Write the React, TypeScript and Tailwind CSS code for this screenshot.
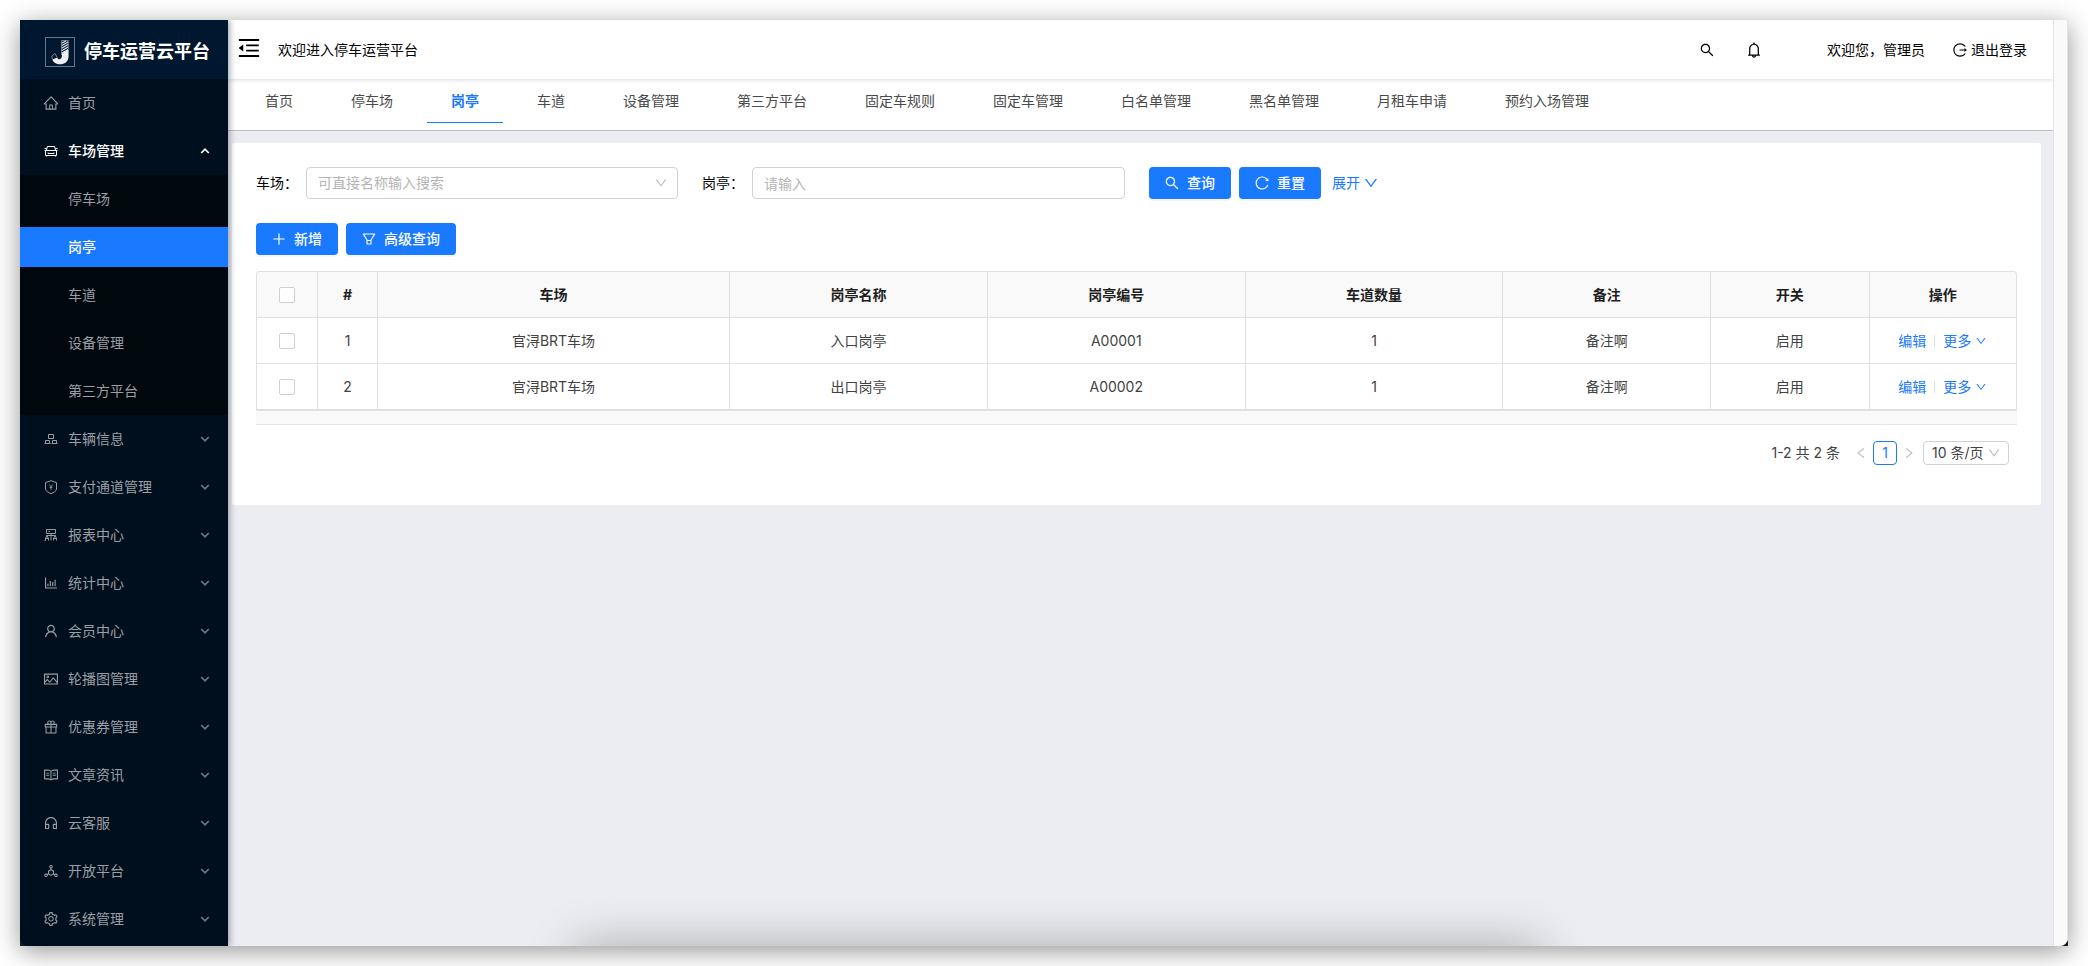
import React from 'react';
import {
  AiOutlineHome, AiOutlineBarChart, AiOutlineUser, AiOutlinePicture,
  AiOutlineGift, AiOutlineRead, AiOutlineCustomerService, AiOutlineDeploymentUnit, AiOutlineSetting,
  AiOutlineSearch, AiOutlineBell, AiOutlineLogout, AiOutlineReload, AiOutlinePlus, AiOutlineFilter, AiOutlineDown,
  AiOutlineLeft, AiOutlineRight, AiOutlineMenuFold,
} from 'react-icons/ai';

type IconType = React.ComponentType<{ className?: string }>;

function ParkIcon({ className }: { className?: string }) {
  return (
    <svg viewBox="-1 -1 16 16" fill="none" stroke="currentColor" className={className}>
      <path d="M2.5 6 L3.4 2.5 H10.6 L11.5 6 M0.5 6.5 H13.5 M0.5 4.5 H2.5 M11.5 4.5 H13.5 M1.5 6.5 V11.5 H12.5 V6.5 M4 8.5 V9.5 H10 V8.5 M2.5 11.5 V12.5 M11.5 11.5 V12.5" />
    </svg>
  );
}

function BoxesIcon({ className }: { className?: string }) {
  return (
    <svg viewBox="-1 -1 16 16" fill="none" stroke="currentColor" className={className}>
      <path d="M4.5 2.5 H9.5 V6.5 H4.5 Z M1.5 8.5 H5.5 V11.5 H1.5 Z M8.5 8.5 H12.5 V11.5 H8.5 Z M5.5 11.5 H6.5 M1.5 11.5 H0.5 M7.5 11.5 H8.5 M12.5 11.5 H13.5" />
    </svg>
  );
}

function PayShieldIcon({ className }: { className?: string }) {
  return (
    <svg viewBox="-1 -1 16 16" fill="none" stroke="currentColor" className={className}>
      <path d="M7 0.7 L12.5 2.6 V9 C12.5 11 9.5 12.6 7 13.7 C4.5 12.6 1.5 11 1.5 9 V2.6 Z" />
      <path d="M5.3 4.5 L7 7 L8.7 4.5 M7 7 V9.8 M5.5 7.4 H8.5" strokeWidth="0.8" />
    </svg>
  );
}

function ReportIcon({ className }: { className?: string }) {
  return (
    <svg viewBox="-1 -1 16 16" fill="none" stroke="currentColor" className={className}>
      <path d="M2.5 1.5 H11.5 V5.5 H2.5 Z M4.5 3.5 H6 M7 5.5 V12.5 M2.5 7.5 H11.5 M2.8 7.5 L1.5 10.5 V12.5 H0.5 M2.8 7.5 L4.5 10.5 V12.5 M11.2 7.5 L9.5 10.5 V12.5 M11.2 7.5 L12.5 10.5 V12.5 M1.5 10.5 H4.5 M9.5 10.5 H12.5" />
    </svg>
  );
}

const groups: { label: string; icon: IconType }[] = [
  { label: '车辆信息', icon: BoxesIcon },
  { label: '支付通道管理', icon: PayShieldIcon },
  { label: '报表中心', icon: ReportIcon },
  { label: '统计中心', icon: AiOutlineBarChart },
  { label: '会员中心', icon: AiOutlineUser },
  { label: '轮播图管理', icon: AiOutlinePicture },
  { label: '优惠券管理', icon: AiOutlineGift },
  { label: '文章资讯', icon: AiOutlineRead },
  { label: '云客服', icon: AiOutlineCustomerService },
  { label: '开放平台', icon: AiOutlineDeploymentUnit },
  { label: '系统管理', icon: AiOutlineSetting },
];

const parkingItems = ['停车场', '岗亭', '车道', '设备管理', '第三方平台'];

const tabs = ['首页', '停车场', '岗亭', '车道', '设备管理', '第三方平台', '固定车规则', '固定车管理', '白名单管理', '黑名单管理', '月租车申请', '预约入场管理'];

const rows = [
  { id: 1, park: '官浔BRT车场', name: '入口岗亭', code: 'A00001', lanes: 1, note: '备注啊', state: '启用' },
  { id: 2, park: '官浔BRT车场', name: '出口岗亭', code: 'A00002', lanes: 1, note: '备注啊', state: '启用' },
];

function Caret({ className }: { className?: string }) {
  return (
    <svg viewBox="0 0 10 10" fill="none" stroke="currentColor" strokeWidth="1.7" className={className}>
      <path d="M1.2 3 L5 6.8 L8.8 3" />
    </svg>
  );
}

function Sidebar() {
  return (
    <aside className="relative z-20 flex w-52 shrink-0 flex-col bg-[#000f1e] text-[#9a9fa5] shadow-[2px_0_6px_rgba(0,21,41,0.35)]">
      <div className="flex h-[59px] shrink-0 items-center gap-2 bg-[#001730] pt-1 pl-6 text-white">
        <svg viewBox="0 0 32 32" className="h-8 w-8 shrink-0" fill="none">
          <rect x="1.5" y="1.5" width="29" height="29" stroke="#66758a" />
          <path d="M17.5 4.5 H24.3 V13 L17.5 19 Z" fill="#0d2238" stroke="#8a96a5" strokeWidth="0.8" />
          <path d="M18 7 L22 5 M18 9.5 L24 6 M18 12 L24 8.5 M18 14.5 L24 11 M18 17 L24 13.5" stroke="#dfe4e9" strokeWidth="1.1" />
          <path d="M24.6 13.5 V20 C24.6 31 9.5 30 8.5 23.5 L13.2 21.5 C14.2 24.5 18 23.5 18 19.5 V17.5 Z" fill="#edeff1" />
          <path d="M8.5 23.5 L7.8 20 L11 17.5 L13.2 21.5" stroke="#8a96a5" strokeWidth="0.8" />
        </svg>
        <h1 className="text-lg font-bold whitespace-nowrap">停车运营云平台</h1>
      </div>
      <nav>
        <a href="#" className="flex h-12 items-center gap-[9px] pl-[23px]">
          <AiOutlineHome className="h-4 w-4" />
          首页
        </a>
        <a href="#" className="flex h-12 items-center gap-[9px] pr-[18px] pl-[23px] font-medium text-white">
          <ParkIcon className="h-4 w-4" />
          <span className="flex-1">车场管理</span>
          <Caret className="h-2.5 w-2.5 rotate-180" />
        </a>
        <ul className="flex flex-col gap-2 bg-[#00080d] py-1">
          {parkingItems.map((item) => (
            <li key={item}>
              <a
                href="#"
                className={item === '岗亭' ? 'flex h-10 items-center bg-[#1979ff] pl-12 font-medium text-white' : 'flex h-10 items-center pl-12'}
              >
                {item}
              </a>
            </li>
          ))}
        </ul>
        {groups.map(({ label, icon: Icon }) => (
          <a key={label} href="#" className="flex h-12 items-center gap-[9px] pr-[18px] pl-[23px]">
            <Icon className="h-4 w-4" />
            <span className="flex-1">{label}</span>
            <Caret className="h-2.5 w-2.5 text-[#6f767e]" />
          </a>
        ))}
      </nav>
    </aside>
  );
}

function TopBar() {
  return (
    <header className="relative z-10 flex h-[59px] shrink-0 items-center bg-white pr-[26px] pl-2 text-black shadow-[0_1px_4px_rgba(0,21,41,0.15)]">
      <button type="button" aria-label="收起菜单" className="mb-1">
        <AiOutlineMenuFold className="h-[26px] w-[26px]" />
      </button>
      <span className="ml-4">欢迎进入停车运营平台</span>
      <button type="button" aria-label="搜索" className="ml-auto">
        <AiOutlineSearch className="h-4 w-4" />
      </button>
      <button type="button" aria-label="通知" className="ml-[30px]">
        <AiOutlineBell className="h-[18px] w-[18px]" />
      </button>
      <span className="ml-16">欢迎您，管理员</span>
      <a href="#" className="ml-[27px] flex items-center gap-[3px]">
        <AiOutlineLogout className="h-4 w-4" />
        退出登录
      </a>
    </header>
  );
}

function TabBar() {
  return (
    <nav className="flex h-[52px] shrink-0 gap-[10px] border-b border-[#c0c0c4] bg-white pl-[13px] text-[#4a4a4a]">
      {tabs.map((tab) => (
        <a
          key={tab}
          href="#"
          className={
            tab === '岗亭'
              ? 'flex h-11 items-center border-b border-[#1979ff] px-6 pt-px font-bold text-[#1979ff]'
              : 'flex h-11 items-center px-6'
          }
        >
          {tab}
        </a>
      ))}
    </nav>
  );
}

const primaryButton = 'flex h-8 items-center gap-[7px] rounded bg-[#1979ff] pr-4 pl-[15px] font-medium text-white shadow-[0_2px_0_rgba(0,0,0,0.04)]';
const checkbox = 'block mx-auto h-4 w-4 appearance-none rounded-xs border border-[#d0d0d0] bg-white';

function Filters() {
  return (
    <form className="flex items-center">
      <label htmlFor="park" className="text-black">车场：</label>
      <div className="relative ml-2 w-[372px]">
        <select id="park" defaultValue="" className="h-8 w-full appearance-none rounded border border-[#d2d2d2] bg-white px-[11px] text-[#b4b4b4]">
          <option value="">可直接名称输入搜索</option>
        </select>
        <AiOutlineDown className="pointer-events-none absolute top-[9px] right-2.5 h-3.5 w-3.5 text-[#bcbcbc]" />
      </div>
      <label htmlFor="booth" className="ml-6 text-black">岗亭：</label>
      <input id="booth" placeholder="请输入" className="ml-2 h-8 w-[373px] rounded border border-[#d2d2d2] px-[11px] placeholder:text-[#b4b4b4]" />
      <button type="button" className={`${primaryButton} ml-6`}>
        <AiOutlineSearch className="h-4 w-4" />
        查询
      </button>
      <button type="button" className={`${primaryButton} ml-2`}>
        <AiOutlineReload className="h-4 w-4" />
        重置
      </button>
      <a href="#" className="ml-[11px] flex items-center gap-[3px] text-[#1979ff]">
        展开
        <AiOutlineDown className="h-4 w-4" />
      </a>
    </form>
  );
}

function BoothTable() {
  return (
    <div className="mt-4 border-b border-[#e6e6e6] bg-[#f9f9f9] pb-[13px]">
      <table className="w-full table-fixed border-separate border-spacing-0 rounded-t border-x-0 border-y border-l border-[#e0e0e0] bg-white text-center text-[#424242] [&_td]:h-[46px] [&_td]:border-r [&_td]:border-b [&_td]:border-[#e0e0e0] [&_th]:h-[46px] [&_th]:border-r [&_th]:border-b [&_th]:border-[#e0e0e0] [&_th]:bg-[#f9f9f9]">
        <colgroup>
          <col className="w-[61px]" />
          <col className="w-[60px]" />
          <col className="w-[20%]" />
          <col className="w-[14.65%]" />
          <col className="w-[14.65%]" />
          <col className="w-[14.65%]" />
          <col className="w-[11.8%]" />
          <col className="w-[9%]" />
          <col />
        </colgroup>
        <thead className="text-[#1f1f1f]">
          <tr>
            <th className="rounded-tl">
              <input type="checkbox" aria-label="全选" className={checkbox} />
            </th>
            <th>#</th>
            <th>车场</th>
            <th>岗亭名称</th>
            <th>岗亭编号</th>
            <th>车道数量</th>
            <th>备注</th>
            <th>开关</th>
            <th className="rounded-tr">操作</th>
          </tr>
        </thead>
        <tbody>
          {rows.map((row) => (
            <tr key={row.id}>
              <td>
                <input type="checkbox" aria-label={row.code} className={checkbox} />
              </td>
              <td>{row.id}</td>
              <td>{row.park}</td>
              <td>{row.name}</td>
              <td>{row.code}</td>
              <td>{row.lanes}</td>
              <td>{row.note}</td>
              <td>{row.state}</td>
              <td>
                <div className="flex items-center justify-center text-[#1979ff]">
                  <a href="#">编辑</a>
                  <span className="mx-2 h-3 w-px bg-[#e0e0e0]" />
                  <a href="#" className="flex items-center gap-1">
                    更多
                    <AiOutlineDown className="h-3 w-3" />
                  </a>
                </div>
              </td>
            </tr>
          ))}
        </tbody>
      </table>
    </div>
  );
}

function Pagination() {
  return (
    <div className="mt-4 flex h-6 items-center justify-end pr-2 text-[#424242]">
      <span>1-2 共 2 条</span>
      <button type="button" aria-label="上一页" className="ml-3.5 text-[#bcbcbc]">
        <AiOutlineLeft className="h-3.5 w-3.5" />
      </button>
      <button type="button" className="mx-[5px] h-6 w-6 rounded border border-[#1979ff] leading-5 text-[#1979ff]">1</button>
      <button type="button" aria-label="下一页" className="text-[#bcbcbc]">
        <AiOutlineRight className="h-3.5 w-3.5" />
      </button>
      <div className="relative ml-[7px]">
        <select aria-label="每页条数" className="h-6 w-[86px] appearance-none rounded border border-[#d2d2d2] bg-white pl-2 leading-5">
          <option>10 条/页</option>
        </select>
        <AiOutlineDown className="pointer-events-none absolute top-[5px] right-2 h-3.5 w-3.5 text-[#bcbcbc]" />
      </div>
    </div>
  );
}

export default function App() {
  return (
    <div className="h-screen overflow-hidden bg-white p-5 font-[Inter,'Noto_Sans_CJK_SC',sans-serif] text-sm">
      <div className="h-full bg-[#1a1a1a] shadow-[0_5px_24px_rgba(0,0,0,0.42)]">
        <div className="flex h-full overflow-hidden rounded-b-lg">
          <Sidebar />
          <div className="relative flex min-w-0 flex-1 flex-col overflow-hidden bg-[#ecedf2]">
            <TopBar />
            <TabBar />
            <main className="mt-3 mr-3 ml-1 rounded-xs bg-white px-6 pt-6 pb-10">
              <Filters />
              <div className="mt-6 flex gap-2">
                <button type="button" className={primaryButton}>
                  <AiOutlinePlus className="h-4 w-4" />
                  新增
                </button>
                <button type="button" className={primaryButton}>
                  <AiOutlineFilter className="h-4 w-4" />
                  高级查询
                </button>
              </div>
              <BoothTable />
              <Pagination />
            </main>
            <div className="pointer-events-none absolute right-[28%] -bottom-10 left-[19%] h-10 shadow-[0_0_48px_rgba(0,0,0,0.3)]" />
          </div>
          <div className="w-[15px] shrink-0 border-x border-[#e2e2e2] bg-[#fafafa]" />
        </div>
      </div>
    </div>
  );
}
